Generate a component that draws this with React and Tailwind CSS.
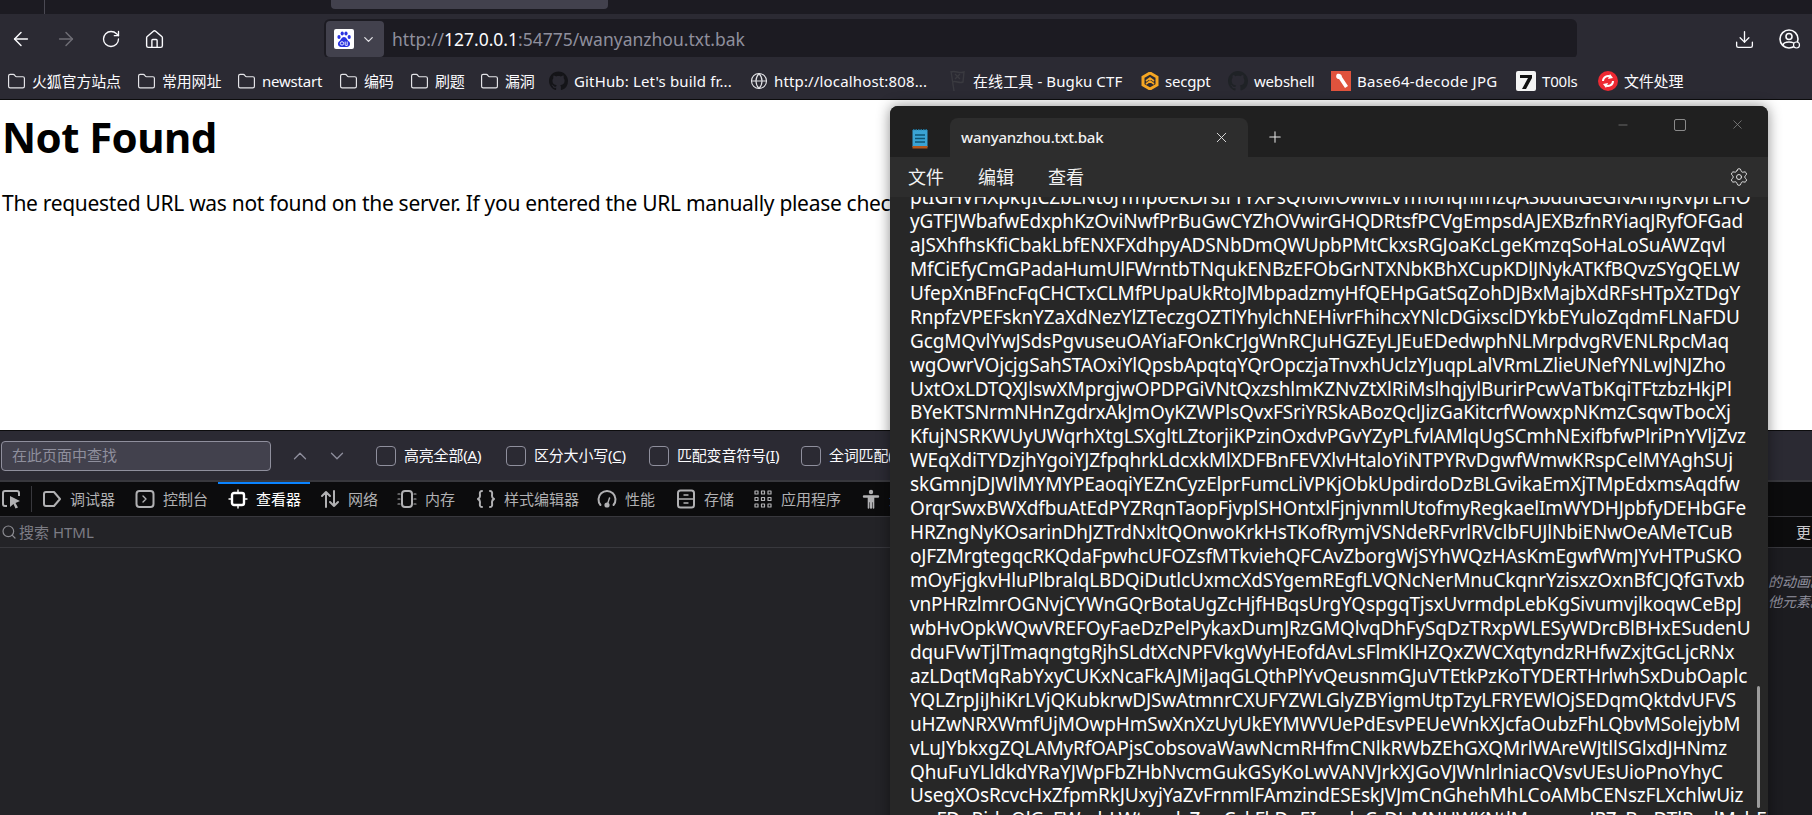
import React from "react";
import { ArrowLeft, ArrowRight, RotateCw, Home, Download, ChevronDown, ChevronUp, Folder, Globe, Search, X, Plus, Minus, Settings } from "lucide-react";

const lines = [
"ptIGHVHXpktjICZbLNtoJTmpoekDrsIrTYXPsQfoMOwMLvTmonqhimzqASbdulGeGNAmgKvprLHO",
"yGTFJWbafwEdxphKzOviNwfPrBuGwCYZhOVwirGHQDRtsfPCVgEmpsdAJEXBzfnRYiaqJRyfOFGad",
"aJSXhfhsKfiCbakLbfENXFXdhpyADSNbDmQWUpbPMtCkxsRGJoaKcLgeKmzqSoHaLoSuAWZqvl",
"MfCiEfyCmGPadaHumUlFWrntbTNqukENBzEFObGrNTXNbKBhXCupKDlJNykATKfBQvzSYgQELW",
"UfepXnBFncFqCHCTxCLMfPUpaUkRtoJMbpadzmyHfQEHpGatSqZohDJBxMajbXdRFsHTpXzTDgY",
"RnpfzVPEFsknYZaXdNezYlZTeczgOZTlYhylchNEHivrFhihcxYNlcDGixsclDYkbEYuloZqdmFLNaFDU",
"GcgMQvlYwJSdsPgvuseuOAYiaFOnkCrJgWnRCJuHGZEyLJEuEDedwphNLMrpdvgRVENLRpcMaq",
"wgOwrVOjcjgSahSTAOxiYlQpsbApqtqYQrOpczjaTnvxhUclzYJuqpLalVRmLZlieUNefYNLwJNJZho",
"UxtOxLDTQXJlswXMprgjwOPDPGiVNtQxzshlmKZNvZtXlRiMslhqjylBurirPcwVaTbKqiTFtzbzHkjPl",
"BYeKTSNrmNHnZgdrxAkJmOyKZWPlsQvxFSriYRSkABozQclJizGaKitcrfWowxpNKmzCsqwTbocXj",
"KfujNSRKWUyUWqrhXtgLSXgltLZtorjiKPzinOxdvPGvYZyPLfvlAMlqUgSCmhNExifbfwPlriPnYVljZvz",
"WEqXdiTYDzjhYgoiYJZfpqhrkLdcxkMlXDFBnFEVXlvHtaloYiNTPYRvDgwfWmwKRspCelMYAghSUj",
"skGmnjDJWlMYMYPEaoqiYEZnCyzElprFumcLiVPKjObkUpdirdoDzBLGvikaEmXjTMpEdxmsAqdfw",
"OrqrSwxBWXdfbuAtEdPYZRqnTaopFjvplSHOntxlFjnjvnmlUtofmyRegkaelImWYDHJpbfyDEHbGFe",
"HRZngNyKOsarinDhJZTrdNxltQOnwoKrkHsTKofRymjVSNdeRFvrlRVclbFUJlNbiENwOeAMeTCuB",
"oJFZMrgtegqcRKQdaFpwhcUFOZsfMTkviehQFCAvZborgWjSYhWQzHAsKmEgwfWmJYvHTPuSKO",
"mOyFjgkvHluPlbralqLBDQiDutlcUxmcXdSYgemREgfLVQNcNerMnuCkqnrYzisxzOxnBfCJQfGTvxb",
"vnPHRzlmrOGNvjCYWnGQrBotaUgZcHjfHBqsUrgYQspgqTjsxUvrmdpLebKgSivumvjlkoqwCeBpJ",
"wbHvOpkWQwVREFOyFaeDzPelPykaxDumJRzGMQlvqDhFySqDzTRxpWLESyWDrcBlBHxESudenU",
"dquFVwTjlTmaqngtgRjhSLdtXcNPFVkgWyHEofdAvLsFlmKlHZQxZWCXqtyndzRHfwZxjtGcLjcRNx",
"azLDqtMqRabYxyCUKxNcaFkAJMiJaqGLQthPlYvQeusnmGJuVTEtkPzKoTYDERTHrlwhSxDubOaplc",
"YQLZrpJiJhiKrLVjQKubkrwDJSwAtmnrCXUFYZWLGlyZBYigmUtpTzyLFRYEWlOjSEDqmQktdvUFVS",
"uHZwNRXWmfUjMOwpHmSwXnXzUyUkEYMWVUePdEsvPEUeWnkXJcfaOubzFhLQbvMSolejybM",
"vLuJYbkxgZQLAMyRfOAPjsCobsovaWawNcmRHfmCNlkRWbZEhGXQMrlWAreWJtllSGlxdJHNmz",
"QhuFuYLldkdYRaYJWpFbZHbNvcmGukGSyKoLwVANVJrkXJGoVJWnlrlniacQVsvUEsUioPnoYhyC",
"UsegXOsRcvcHxZfpmRkJUxyjYaZvFrnmlFAmzindESEskJVJmCnGhehMhLCoAMbCENszFLXchlwUiz",
"mcFDgRjdpOlGsFWmhLWtqwdsZnqCvkFkDgEIzmdaCrDJrMNHWKNtlMmzqcwJPZzBrcDTlRzqlMchEPC",
];

const FolderIcon = () => <Folder size={19} strokeWidth={1.5} className="shrink-0 text-[#e4e4e8]" />;

const bookmarks = [
  { t: "火狐官方站点", w: "w-[89px]", icon: <FolderIcon /> },
  { t: "常用网址", w: "w-[59px]", icon: <FolderIcon /> },
  { t: "newstart", w: "w-[61px]", icon: <FolderIcon /> },
  { t: "编码", w: "w-[30px]", icon: <FolderIcon /> },
  { t: "刷题", w: "w-[29px]", icon: <FolderIcon /> },
  { t: "漏洞", w: "w-[28px]", icon: <FolderIcon /> },
  {
    t: "GitHub: Let's build fr...", w: "w-[160px] tracking-[0.15px]",
    icon: (
      <svg width="19" height="20" viewBox="0 0 16 16" className="shrink-0" fill="#141418">
        <path d="M8 0C3.58 0 0 3.58 0 8c0 3.54 2.29 6.53 5.47 7.59.4.07.55-.17.55-.38 0-.19-.01-.82-.01-1.49-2.01.37-2.53-.49-2.69-.94-.09-.23-.48-.94-.82-1.13-.28-.15-.68-.52-.01-.53.63-.01 1.08.58 1.23.82.72 1.21 1.87.87 2.33.66.07-.52.28-.87.51-1.07-1.78-.2-3.64-.89-3.64-3.95 0-.87.31-1.59.82-2.15-.08-.2-.36-1.02.08-2.12 0 0 .67-.21 2.2.82.64-.18 1.32-.27 2-.27s1.36.09 2 .27c1.53-1.04 2.2-.82 2.2-.82.44 1.1.16 1.92.08 2.12.51.56.82 1.27.82 2.15 0 3.07-1.87 3.75-3.65 3.95.29.25.54.73.54 1.48 0 1.07-.01 1.93-.01 2.2 0 .21.15.46.55.38A8.01 8.01 0 0 0 16 8c0-4.42-3.58-8-8-8z" />
      </svg>
    ),
  },
  { t: "http://localhost:808...", w: "w-[157px] tracking-[0.15px]", icon: <Globe size={18} strokeWidth={1.5} className="shrink-0 text-[#e4e4e8]" /> },
  {
    t: "在线工具 - Bugku CTF", w: "w-[152px] tracking-[0.1px]",
    icon: (
      <svg width="20" height="24" viewBox="0 0 20 24" className="shrink-0" fill="none" stroke="#3a3a40" strokeWidth="1.4">
        <path d="M4 2 L7 22" />
        <path d="M4 3 C8 1 12 5 17 3 L16 13 C12 15 9 11 5.5 13" />
        <path d="M8 5 L13 10 M13 5 L8 10" />
      </svg>
    ),
  },
  {
    t: "secgpt", w: "w-[47px]",
    icon: (
      <svg width="18" height="18" viewBox="0 0 18 18" className="shrink-0" fill="none">
        <path d="M9 1 L16 5 V13 L9 17 L2 13 V5 Z" stroke="#f5a623" strokeWidth="3" />
        <path d="M5 9 L9 6 L13 9 M5 12 L9 9 L13 12" stroke="#f5a623" strokeWidth="1.6" />
      </svg>
    ),
  },
  {
    t: "webshell", w: "w-[61px]",
    icon: (
      <svg width="20" height="20" viewBox="0 0 16 16" className="shrink-0" fill="#1f2226">
        <path d="M8 0C3.58 0 0 3.58 0 8c0 3.54 2.29 6.53 5.47 7.59.4.07.55-.17.55-.38 0-.19-.01-.82-.01-1.49-2.01.37-2.53-.49-2.69-.94-.09-.23-.48-.94-.82-1.13-.28-.15-.68-.52-.01-.53.63-.01 1.08.58 1.23.82.72 1.21 1.87.87 2.33.66.07-.52.28-.87.51-1.07-1.78-.2-3.64-.89-3.64-3.95 0-.87.31-1.59.82-2.15-.08-.2-.36-1.02.08-2.12 0 0 .67-.21 2.2.82.64-.18 1.32-.27 2-.27s1.36.09 2 .27c1.53-1.04 2.2-.82 2.2-.82.44 1.1.16 1.92.08 2.12.51.56.82 1.27.82 2.15 0 3.07-1.87 3.75-3.65 3.95.29.25.54.73.54 1.48 0 1.07-.01 1.93-.01 2.2 0 .21.15.46.55.38A8.01 8.01 0 0 0 16 8c0-4.42-3.58-8-8-8z" />
      </svg>
    ),
  },
  {
    t: "Base64-decode JPG", w: "w-[143px] tracking-[0.3px]",
    icon: (
      <svg width="20" height="20" viewBox="0 0 20 20" className="shrink-0">
        <rect width="20" height="20" fill="#e0533d" />
        <path d="M6 3 C4 6 6 8 8 8 L14 17 L17 15 L11 6 C11 4 9 2 6 3 Z" fill="#fff" />
      </svg>
    ),
  },
  {
    t: "T00ls", w: "w-[40px]",
    icon: (
      <svg width="20" height="20" viewBox="0 0 20 20" className="shrink-0">
        <rect width="20" height="20" rx="2" fill="#f4f4f4" />
        <path d="M4 4 H16 V7 L10 18 H6 L12 7 H4 Z" fill="#111" />
      </svg>
    ),
  },
  {
    t: "文件处理", w: "w-[61px]",
    icon: (
      <svg width="20" height="20" viewBox="0 0 20 20" className="shrink-0" fill="none">
        <circle cx="10" cy="10" r="10" fill="#ee2a33" />
        <path d="M5 10 A5 5 0 0 1 13 6 M15 10 A5 5 0 0 1 7 14" stroke="#fff" strokeWidth="2" />
        <path d="M12 3 L15 7 L10 8 Z M8 17 L5 13 L10 12 Z" fill="#fff" />
      </svg>
    ),
  },
];

const dtIcon = "w-[20px] h-[20px] shrink-0";
const DtSvg = ({ children, c = "#b1b1b3" }) => (
  <svg viewBox="0 0 20 20" className={dtIcon} fill="none" stroke={c} strokeWidth="2" strokeLinecap="round" strokeLinejoin="round">
    {children}
  </svg>
);

const tabs = [
  { t: "调试器", w: "w-[45px]", i: <DtSvg><path d="M2 5 a2 2 0 0 1 2-2 h8 l6 7 l-6 7 h-8 a2 2 0 0 1-2-2 Z" /></DtSvg> },
  { t: "控制台", w: "w-[45px]", i: <DtSvg><rect x="1.5" y="2" width="17" height="16" rx="3" /><path d="M8 7 l3 3 l-3 3" strokeWidth="1.4" /></DtSvg> },
  { t: "查看器", w: "w-[44px]", on: true, i: <DtSvg c="#ffffff"><rect x="4" y="4" width="12" height="12" rx="2" strokeWidth="2.4" /><path d="M10 1 v3 M10 16 v3 M1 10 h3 M16 10 h3" strokeWidth="1.4" /></DtSvg> },
  { t: "网络", w: "w-[29px]", i: <DtSvg><path d="M6 18 V3 M2 7 l4-4 l4 4 M14 2 v15 M10 13 l4 4 l4-4" /></DtSvg> },
  { t: "内存", w: "w-[31px]", i: <DtSvg><rect x="5" y="2" width="10" height="16" rx="3" /><path d="M1 5 h2 M1 10 h2 M1 15 h2 M17 5 h2 M17 10 h2 M17 15 h2" strokeWidth="1.2" /></DtSvg> },
  { t: "样式编辑器", w: "w-[73px]", i: <DtSvg><path d="M6 2 C3 2 4 5 4 7 C4 9 2 10 2 10 C2 10 4 11 4 13 C4 15 3 18 6 18 M14 2 C17 2 16 5 16 7 C16 9 18 10 18 10 C18 10 16 11 16 13 C16 15 17 18 14 18" /></DtSvg> },
  { t: "性能", w: "w-[31px]", i: <DtSvg><path d="M3.5 16 A8.5 8.5 0 1 1 16.5 16" /><path d="M10.5 15 l2-6" strokeWidth="1.4" /><circle cx="10" cy="16" r="1.6" fill="#b1b1b3" /></DtSvg> },
  { t: "存储", w: "w-[29px]", i: <DtSvg><rect x="2" y="1.5" width="16" height="17" rx="2.5" /><path d="M2 10 h16 M8 6 h4 M8 14 h4" strokeWidth="1.4" /></DtSvg> },
  { t: "应用程序", w: "w-[60px]", i: <DtSvg><path d="M2 2 h3 v3 h-3 Z M8.5 2 h3 v3 h-3 Z M15 2 h3 v3 h-3 Z M2 8.5 h3 v3 h-3 Z M8.5 8.5 h3 v3 h-3 Z M15 8.5 h3 v3 h-3 Z M2 15 h3 v3 h-3 Z M8.5 15 h3 v3 h-3 Z M15 15 h3 v3 h-3 Z" strokeWidth="1.2" /></DtSvg> },
  { t: "无障碍环境", w: "w-[75px]", i: <DtSvg><circle cx="10" cy="3" r="2.2" fill="#b1b1b3" stroke="none" /><path d="M3 7.5 h14 M10 7.5 v11" strokeWidth="2.4" /><path d="M7.5 7.5 h5 v5 h-5 Z M7.5 12 v7 M12.5 12 v7" fill="#b1b1b3" strokeWidth="1.6" /></DtSvg> },
];

const finds = [
  { t: "高亮全部(", u: "A", w: "w-[80px]" },
  { t: "区分大小写(", u: "C", w: "w-[93px]" },
  { t: "匹配变音符号(", u: "I", w: "w-[102px]" },
  { t: "全词匹配(", u: "W", w: "w-[80px]" },
];

export default function App() {
  return (
    <div className="relative flex h-[815px] w-[1812px] flex-col overflow-hidden bg-white font-['Noto_Sans','Noto_Sans_CJK_SC',sans-serif]">
      {/* tab strip */}
      <div className="flex h-[14px] shrink-0 bg-[#1c1b22]">
        <div className="h-[14px] w-[45px] border-r border-[#4a4953]" />
        <div className="ml-[286px] h-[9px] w-[277px] rounded-b-[4px] bg-[#42414d]" />
      </div>

      {/* nav bar */}
      <div className="flex h-[43px] shrink-0 items-center bg-[#2b2a33] pl-[10px] pt-[7px]">
        <ArrowLeft size={22} strokeWidth={1.6} className="text-[#fbfbfe]" />
        <ArrowRight size={22} strokeWidth={1.6} className="ml-[23px] text-[#6f6e76]" />
        <RotateCw size={20} strokeWidth={1.6} className="ml-[24px] text-[#fbfbfe]" />
        <Home size={21} strokeWidth={1.6} className="ml-[23px] text-[#fbfbfe]" />
        <div className="ml-[159px] flex h-[40px] w-[1253px] items-center rounded-[6px] bg-[#1c1b22] pl-[2px]">
          <div className="flex h-[36px] w-[58px] items-center rounded-[4px] bg-[#42414d] pl-[8px]">
            <svg width="20" height="20" viewBox="0 0 20 20" className="shrink-0">
              <rect width="20" height="20" rx="2" fill="#fff" />
              <g fill="#2932e1">
                <ellipse cx="5" cy="8" rx="1.6" ry="2.1" />
                <ellipse cx="8.2" cy="4.5" rx="1.6" ry="2.1" />
                <ellipse cx="12" cy="4.5" rx="1.6" ry="2.1" />
                <ellipse cx="15.2" cy="8" rx="1.6" ry="2.1" />
                <path d="M10 8 C7.5 8 7 11 5 12.5 C3 14 4 18 7 18 H13 C16 18 17 14 15 12.5 C13 11 12.5 8 10 8 Z" />
              </g>
              <circle cx="8" cy="14.4" r="1.7" fill="none" stroke="#fff" strokeWidth="0.9" />
              <path d="M11.2 12.5 v3 q0 1 1 1 h1 v-4" fill="none" stroke="#fff" strokeWidth="0.9" />
            </svg>
            <ChevronDown size={15} strokeWidth={2} className="ml-[7px] text-[#e4e4e8]" />
          </div>
          <span className="ml-[8px] whitespace-pre text-[17.5px] text-[#8f8f9d]">
            http://<span className="text-[#fbfbfe]">127.0.0.1</span>:54775/wanyanzhou.txt.bak
          </span>
        </div>
        <Download size={21} strokeWidth={1.5} className="ml-[157px] text-[#fbfbfe]" />
        <div className="relative ml-[24px]">
          <svg width="22" height="22" viewBox="0 0 22 22" fill="none" stroke="#fbfbfe" strokeWidth="1.6">
            <circle cx="10" cy="11" r="9" />
            <circle cx="10" cy="8.5" r="3" />
            <path d="M4 17 C5 13 15 13 16 17" />
            <circle cx="17.5" cy="17" r="3" fill="#2b2a33" strokeWidth="1.2" />
          </svg>
        </div>
      </div>

      {/* bookmarks */}
      <div className="flex h-[43px] shrink-0 items-center gap-[16px] border-b border-[#0c0c0d] bg-[#2b2a33] pl-[7px] pt-[6px] text-[15px] tracking-[-0.2px] text-[#fbfbfe]">
        {bookmarks.map((b) => (
          <div key={b.t} className="flex items-center gap-[6px]">
            {b.icon}
            <span className={`${b.w} whitespace-pre`}>{b.t}</span>
          </div>
        ))}
      </div>

      {/* page */}
      <div className="h-[330px] shrink-0 overflow-hidden bg-white pl-[2px] text-black">
        <h1 className="mt-[9px] text-[42px] font-bold leading-[56px] tracking-[-0.6px]">Not Found</h1>
        <p className="mt-[24px] whitespace-pre text-[21px] leading-[28px] tracking-[-0.3px]">
          The requested URL was not found on the server. If you entered the URL manually please check your spelling and try again.
        </p>
      </div>

      {/* find bar */}
      <div className="flex h-[52px] shrink-0 items-center border-t border-[#0c0c0d] border-b-2 border-b-[#38383d] bg-[#2b2a33] pl-[1px] text-[15px] text-[#fbfbfe]">
        <div className="flex h-[30px] w-[270px] items-center rounded-[4px] border border-[#8f8f9d] bg-[#42414d] pl-[10px] text-[15px] text-[#8f8f9d]">
          在此页面中查找
        </div>
        <ChevronUp size={22} strokeWidth={1.4} className="ml-[18px] text-[#8f8f9d]" />
        <ChevronDown size={22} strokeWidth={1.4} className="ml-[15px] text-[#8f8f9d]" />
        <div className="ml-[28px] flex items-center gap-[22px]">
          {finds.map((f) => (
            <div key={f.t} className="flex items-center gap-[8px]">
              <div className="h-[20px] w-[20px] rounded-[4px] border border-[#8f8f9d] bg-[#2b2a33]" />
              <span className={`${f.w} whitespace-pre tracking-[-0.2px]`}>
                {f.t}<span className="underline">{f.u}</span>)
              </span>
            </div>
          ))}
        </div>
      </div>

      {/* devtools toolbar */}
      <div className="flex h-[35px] shrink-0 items-stretch border-b border-[#38383d] bg-[#0c0c0d] text-[15px] text-[#b1b1b3]">
        <div className="flex w-[31px] items-center pl-[1px]">
          <svg viewBox="0 0 20 20" className={dtIcon} fill="none" stroke="#b1b1b3" strokeWidth="2">
            <path d="M6 17 H4 a2 2 0 0 1-2-2 V4 a2 2 0 0 1 2-2 h12 a2 2 0 0 1 2 2 v3" />
            <path d="M9 7 L19 12 L14.5 14 L17 18.5 L14.5 19.5 L12.5 15 L9 18 Z" fill="#b1b1b3" stroke="none" />
          </svg>
        </div>
        <div className="my-[4px] w-px bg-[#38383d]" />
        <div className="flex items-stretch">
          {tabs.map((x) => (
            <div
              key={x.t}
              className={`flex items-center gap-[8px] px-[10px] ${x.on ? "border-t-2 border-[#0a84ff] pb-[2px] text-white" : ""}`}
            >
              {x.i}
              <span className={`${x.w} whitespace-pre`}>{x.t}</span>
            </div>
          ))}
        </div>
      </div>

      {/* devtools panels */}
      <div className="flex min-h-0 flex-1 bg-[#232327]">
        <div className="min-w-0 flex-1">
          <div className="flex h-[31px] items-center gap-[2px] border-b border-[#38383d] pl-[1px] text-[15px] text-[#7c7c84]">
            <Search size={16} strokeWidth={1.8} className="text-[#8a8a90]" />
            搜索 HTML
          </div>
        </div>
        <div className="flex w-[112px] shrink-0 flex-col overflow-hidden bg-[#1c1c20]">
          <div className="flex h-[31px] items-center whitespace-nowrap border-b border-[#38383d] bg-[#0c0c0d] pl-[96px] text-[15px] text-[#c8c8cc]">
            更多
          </div>
          <div className="mt-[24px] whitespace-pre pl-[68px] text-[14px] italic leading-[20px] text-[#8f8f9d]">
            的动画。{"\n"}他元素。
          </div>
        </div>
      </div>

      {/* notepad window */}
      <div className="absolute left-[890px] top-[106px] flex h-[760px] w-[878px] flex-col overflow-hidden rounded-t-[8px] bg-[#272727] text-white shadow-[0_0_14px_rgba(0,0,0,0.45)]">
        <div className="flex h-[51px] shrink-0 items-end bg-[#202020] pl-[22px]">
          <svg width="16" height="20" viewBox="0 0 16 20" className="mb-[8px] shrink-0">
            <rect x="0.5" y="1" width="15" height="17" fill="#3ba4d4" />
            <rect x="0.5" y="17" width="15" height="2.5" fill="#b5571b" />
            <path d="M1 0.5 h14" stroke="#1f6f94" strokeWidth="1.5" strokeDasharray="1.5 1" />
            <path d="M3 6 h10 M3 9.5 h10 M3 13 h10" stroke="#0e5372" strokeWidth="1.6" />
          </svg>
          <div className="ml-[22px] flex h-[39px] w-[298px] items-center rounded-t-[8px] bg-[#2d2d2d] pl-[11px]">
            <span className="text-[15px] font-medium tracking-[-0.15px] text-[#f2f2f2]">wanyanzhou.txt.bak</span>
            <X size={17} strokeWidth={1.3} className="ml-auto mr-[18px] text-[#e6e6e6]" />
          </div>
          <Plus size={18} strokeWidth={1.4} className="mb-[11px] ml-[18px] text-[#e6e6e6]" />
          <div className="mb-[25px] ml-[332px] flex items-center">
            <Minus size={14} strokeWidth={1.2} className="text-[#8a8a8a]" />
            <div className="ml-[44px] h-[12px] w-[12px] rounded-[2px] border border-[#8a8a8a]" />
            <X size={15} strokeWidth={1.2} className="ml-[44px] text-[#8a8a8a]" />
          </div>
        </div>
        <div className="flex h-[40px] shrink-0 items-center bg-[#2d2d2d] pl-[18px] text-[18px] text-[#f2f2f2]">
          <span>文件</span>
          <span className="ml-[34px]">编辑</span>
          <span className="ml-[34px]">查看</span>
          <Settings size={20} strokeWidth={1.2} className="ml-auto mr-[19px] text-[#e0e0e0]" />
        </div>
        <div className="relative min-h-0 flex-1 overflow-hidden">
          <div className="-mt-[11px] pl-[20px] text-[19px] leading-[23.93px] tracking-[-0.16px] text-white">
            {lines.map((l) => (
              <div key={l} className="whitespace-pre">{l}</div>
            ))}
          </div>
          <div className="absolute left-[867px] top-[489px] h-[122px] w-[3px] rounded-full bg-[#9c9c9c]" />
        </div>
      </div>
    </div>
  );
}
